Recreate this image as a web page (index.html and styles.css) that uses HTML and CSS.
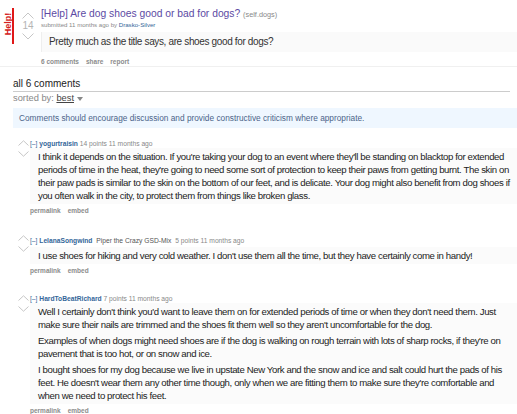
FILE: index.html
```html
<!DOCTYPE html>
<html lang="en">
<head>
    <meta charset="UTF-8">
    <title>[Help] Are dog shoes good or bad for dogs?</title>
    <link rel="stylesheet" href="styles.css">
</head>
<body>
    <div class="post">
        <div class="flair-side">
            <span class="flair-text">Help!</span>
        </div>
        <div class="votes">
            <svg class="arrow" width="12" height="7" viewBox="0 0 12 7"><polyline points="0.5,6.5 6,1 11.5,6.5"/></svg>
            <span class="score">14</span>
            <svg class="arrow" width="12" height="7" viewBox="0 0 12 7"><polyline points="0.5,0.5 6,6 11.5,0.5"/></svg>
        </div>
        <div class="post-main">
            <p class="title"><a href="#">[Help] Are dog shoes good or bad for dogs?</a> <span class="domain">(self.dogs)</span></p>
            <p class="tagline">submitted 11 months ago by <a href="#" class="author">Drasko-Silver</a></p>
            <div class="selftext">Pretty much as the title says, are shoes good for dogs?</div>
            <ul class="buttons">
                <li>6 comments</li>
                <li>share</li>
                <li>report</li>
            </ul>
        </div>
    </div>

    <div class="comment-area">
        <div class="panel-title">all 6 comments</div>
        <div class="sort">sorted by: <span class="sort-choice">best</span> <span class="caret"></span></div>
        <div class="rules">Comments should encourage discussion and provide constructive criticism where appropriate.</div>

        <div class="comment">
            <div class="votes small">
                <svg class="arrow" width="11" height="6" viewBox="0 0 11 6"><polyline points="0.5,5.5 5.5,0.8 10.5,5.5"/></svg>
                <svg class="arrow" width="11" height="6" viewBox="0 0 11 6"><polyline points="0.5,0.5 5.5,5.2 10.5,0.5"/></svg>
            </div>
            <div class="entry">
                <p class="ctag"><span class="expand">[–]</span> <a href="#" class="author">yogurtraisin</a> <span>14 points 11 months ago</span></p>
                <div class="body">
                    <p>I think it depends on the situation. If you're taking your dog to an event where they'll be standing on blacktop for extended periods of time in the heat, they're going to need some sort of protection to keep their paws from getting burnt. The skin on their paw pads is similar to the skin on the bottom of our feet, and is delicate. Your dog might also benefit from dog shoes if you often walk in the city, to protect them from things like broken glass.</p>
                </div>
                <ul class="buttons"><li>permalink</li><li>embed</li></ul>
            </div>
        </div>

        <div class="comment">
            <div class="votes small">
                <svg class="arrow" width="11" height="6" viewBox="0 0 11 6"><polyline points="0.5,5.5 5.5,0.8 10.5,5.5"/></svg>
                <svg class="arrow" width="11" height="6" viewBox="0 0 11 6"><polyline points="0.5,0.5 5.5,5.2 10.5,0.5"/></svg>
            </div>
            <div class="entry">
                <p class="ctag"><span class="expand">[–]</span> <a href="#" class="author">LelanaSongwind</a> <span class="uflair">Piper the Crazy GSD-Mix</span> <span>5 points 11 months ago</span></p>
                <div class="body">
                    <p>I use shoes for hiking and very cold weather. I don't use them all the time, but they have certainly come in handy!</p>
                </div>
                <ul class="buttons"><li>permalink</li><li>embed</li></ul>
            </div>
        </div>

        <div class="comment">
            <div class="votes small">
                <svg class="arrow" width="11" height="6" viewBox="0 0 11 6"><polyline points="0.5,5.5 5.5,0.8 10.5,5.5"/></svg>
                <svg class="arrow" width="11" height="6" viewBox="0 0 11 6"><polyline points="0.5,0.5 5.5,5.2 10.5,0.5"/></svg>
            </div>
            <div class="entry">
                <p class="ctag"><span class="expand">[–]</span> <a href="#" class="author">HardToBeatRichard</a> <span>7 points 11 months ago</span></p>
                <div class="body">
                    <p>Well I certainly don't think you'd want to leave them on for extended periods of time or when they don't need them. Just make sure their nails are trimmed and the shoes fit them well so they aren't uncomfortable for the dog.</p>
                    <p>Examples of when dogs might need shoes are if the dog is walking on rough terrain with lots of sharp rocks, if they're on pavement that is too hot, or on snow and ice.</p>
                    <p>I bought shoes for my dog because we live in upstate New York and the snow and ice and salt could hurt the pads of his feet. He doesn't wear them any other time though, only when we are fitting them to make sure they're comfortable and when we need to protect his feet.</p>
                </div>
                <ul class="buttons"><li>permalink</li><li>embed</li></ul>
            </div>
        </div>
    </div>
</body>
</html>
```

FILE: styles.css
```css
body {
    margin: 0;
    font-family: "Liberation Sans", Arial, sans-serif;
    background-color: #fff;
    color: #222;
    overflow: hidden;
}
p {
    margin: 0;
}
a {
    text-decoration: none;
}
.post {
    display: flex;
    padding: 8px 0 0 3px;
    border-bottom: 1px solid #f0f0f0;
    height: 67px;
    box-sizing: border-box;
}
.flair-side {
    width: 9px;
    height: 36px;
    border-right: 2px solid #e01818;
    position: relative;
    margin-right: 7px;
}
.flair-text {
    display: block;
    transform: rotate(-90deg);
    color: #d42020;
    font-weight: bold;
    font-size: 9px;
    position: absolute;
    left: -9px;
    top: 11px;
    width: 28px;
    text-align: center;
}
.votes {
    width: 14px;
    display: flex;
    flex-direction: column;
    align-items: center;
    padding-top: 4px;
}
.arrow {
    display: block;
    fill: none;
    stroke: #c6c6c6;
    stroke-width: 1;
}
.score {
    font-size: 10px;
    color: #b4b4b4;
    line-height: 11px;
    margin: 1px 0 2px;
}
.post-main {
    flex: 1;
    margin-left: 6px;
}
.title {
    font-size: 10.3px;
    line-height: 12px;
}
.title a {
    color: #5c4aa3;
}
.domain {
    font-size: 7.3px;
    color: #888;
}
.tagline {
    font-size: 6.1px;
    color: #888;
    line-height: 8px;
}
.author {
    color: #369;
}
.selftext {
    background-color: #fafafa;
    border-left: 1px solid #eee;
    font-size: 10px;
    letter-spacing: -0.36px;
    color: #333;
    padding: 4px 7px;
    margin-top: 3px;
    line-height: 12px;
}
.buttons {
    list-style: none;
    margin: 0;
    padding: 0;
    display: flex;
    gap: 7px;
    font-size: 6.5px;
    font-weight: bold;
    color: #8c8c8c;
    line-height: 9px;
}
.post-main .buttons {
    margin-top: 5px;
}
.comment-area {
    padding: 10px 0 0 13px;
}
.panel-title {
    font-size: 10px;
    line-height: 13px;
    border-bottom: 1px solid #ccc;
    margin-right: 7px;
    padding-bottom: 1px;
}
.sort {
    font-size: 9.3px;
    color: #888;
    line-height: 12px;
}
.sort-choice {
    color: #444;
    text-decoration: underline;
}
.caret {
    display: inline-block;
    border-left: 3px solid transparent;
    border-right: 3px solid transparent;
    border-top: 4px solid #888;
    vertical-align: middle;
}
.rules {
    background-color: #eff7ff;
    color: #4c6489;
    font-size: 8.3px;
    padding: 5px 6px;
    margin-top: 4px;
    line-height: 10px;
}
.comment {
    display: flex;
    margin-top: 11px;
}
.comment + .comment {
    margin-top: 19px;
}
.votes.small {
    width: 13px;
    padding-top: 1px;
    margin-left: 4px;
}
.votes.small .arrow + .arrow {
    margin-top: 5px;
}
.entry {
    flex: 1;
}
.ctag {
    font-size: 6.7px;
    color: #888;
    line-height: 9px;
}
.ctag .author {
    font-weight: bold;
}
.expand {
    color: #369;
}
.uflair {
    color: #555;
    margin: 0 2px;
    line-height: 13px;
}
.body {
    background-color: #fbfbfb;
    padding: 2px 0 2px 8px;
    font-size: 9.6px;
    letter-spacing: -0.38px;
    line-height: 13px;
    color: #222;
}
.body p + p {
    margin-top: 3px;
}
.entry .buttons {
    margin-top: 2px;
}
```
